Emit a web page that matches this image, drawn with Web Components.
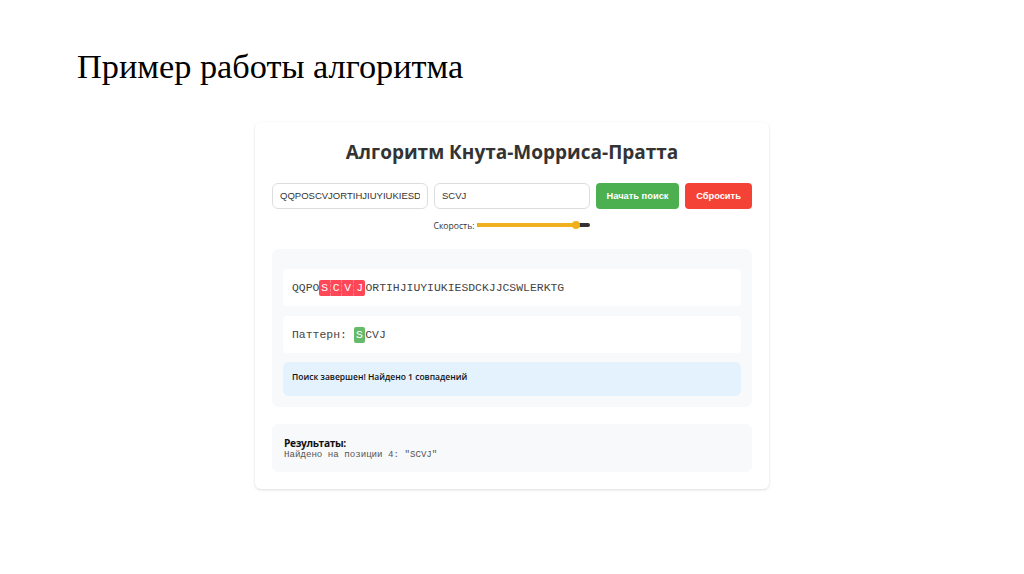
<!DOCTYPE html>
<html lang="ru"><head><meta charset="utf-8"><title>КМП</title>
<style>
html,body{margin:0;padding:0;background:#fff}
body{width:1024px;height:574px;overflow:hidden;font-family:"Open Sans",sans-serif}
</style></head><body>
<slide-page>
  <span slot="title">Пример работы алгоритма</span>
  <kmp-card heading="Алгоритм Кнута-Морриса-Пратта">
    <kmp-controls slot="controls"></kmp-controls>
    <kmp-viz slot="viz">
      <text-row>QQPO<hl-char kind="red" dashed edge="start">S</hl-char><hl-char kind="red" dashed>C</hl-char><hl-char kind="red" dashed>V</hl-char><hl-char kind="red" edge="end">J</hl-char>ORTIHJIUYIUKIESDCKJJCSWLERKTG</text-row>
      <text-row>Паттерн: <hl-char kind="green">S</hl-char>CVJ</text-row>
      <status-box>Поиск завершен! Найдено 1 совпадений</status-box>
    </kmp-viz>
    <kmp-results slot="results"></kmp-results>
  </kmp-card>
</slide-page>
<script>
function def(name, html){
  customElements.define(name, class extends HTMLElement{
    constructor(){super();this.attachShadow({mode:'open'}).innerHTML=html;}
    connectedCallback(){ const h=this.shadowRoot.querySelector('[data-h]'); if(h) h.textContent=this.getAttribute('heading'); }
  });
}
def('slide-page',`<style>
:host{display:block;width:1024px;height:574px;box-sizing:border-box;padding:47px 0 0 77px}
h1{margin:0 0 36px;font:400 34.3px/39px "Liberation Serif",serif;color:#000}
.w{padding-left:178px}
</style><h1><slot name="title"></slot></h1><div class="w"><slot></slot></div>`);
def('kmp-card',`<style>
:host{display:block;width:514px;height:367px;box-sizing:border-box;padding:17px;background:#fff;border-radius:6px;box-shadow:0 1px 3px rgba(0,0,0,.14);font-family:"Open Sans",sans-serif}
h2{margin:0 0 17px;text-align:center;font:700 19px/27px "Open Sans",sans-serif;color:#333}
</style><h2 data-h></h2><slot name="controls"></slot><slot name="viz"></slot><slot name="results"></slot>`);
def('kmp-controls',`<style>
:host{display:block}
.r{display:flex;gap:6px;height:26px}
.i{box-sizing:border-box;width:156px;border:1px solid #ddd;border-radius:6px;padding:0 7px;font:9.52px/24px "Liberation Sans",sans-serif;color:#333;white-space:nowrap;background:#fff}
.i span{display:block;overflow:hidden}
.b{box-sizing:border-box;border-radius:4px;color:#fff;font:700 9.3px/26px "Liberation Sans",sans-serif;text-align:center}
.g{width:83px;background:#4caf50}.d{width:67px;background:#f44336}
.s{display:flex;justify-content:center;align-items:center;gap:3px;margin:8px 0 0;height:18px;font:8.6px/18px "Open Sans",sans-serif;color:#333}
.t{position:relative;display:flex;width:113px;height:4px;border-radius:2px;background:#333;margin-top:-3px}
.f{width:100px;height:4px;border-radius:2px;background:#f0b020}
.k{position:absolute;left:95px;top:-2px;width:8px;height:8px;border-radius:50%;background:#f4b01a}
</style><div class="r"><div class="i"><span>QQPOSCVJORTIHJIUYIUKIESDC</span></div><div class="i"><span>SCVJ</span></div><div class="b g">Начать поиск</div><div class="b d">Сбросить</div></div>
<div class="s"><span>Скорость:</span><div class="t"><div class="f"></div><div class="k"></div></div></div>`);
def('kmp-viz',`<style>
:host{display:flex;flex-direction:column;gap:10px;box-sizing:border-box;height:158px;margin-top:14px;padding:20px 11px 11px;background:#f8f9fa;border-radius:6px}
</style><slot></slot>`);
def('text-row',`<style>
:host{display:block;box-sizing:border-box;height:37px;padding:0 9px;background:#fff;border-radius:4px;font:11.43px/37px "Liberation Mono",monospace;color:#444;white-space:pre}
</style><slot></slot>`);
def('hl-char',`<style>
:host{display:inline-block;box-sizing:border-box;width:11.5px;height:16px;line-height:16px;text-align:center;color:#fff;vertical-align:baseline}
:host([kind=red]){background:#ff4757}
:host([kind=green]){background:#66bb6a;border-radius:2px}
:host([edge=start]){border-radius:2px 0 0 2px}
:host([edge=end]){border-radius:0 2px 2px 0}
:host([dashed]){border-right:1px dashed rgba(255,255,255,.3)}
</style><slot></slot>`);
def('status-box',`<style>
:host{display:block;box-sizing:border-box;height:34px;margin-top:-1px;padding:0 9px;background:#e3f2fd;border-radius:6px;font:600 8.5px/30px "Open Sans",sans-serif;color:#111}
</style><slot></slot>`);
def('kmp-results',`<style>
:host{display:block;box-sizing:border-box;height:48px;margin-top:17px;padding:12px 12px 0;background:#f8f9fa;border-radius:6px}
b{display:block;font:700 10.2px/14px "Open Sans",sans-serif;letter-spacing:-.35px;color:#111}
code{display:block;font:9.14px/10px "Liberation Mono",monospace;color:#555;white-space:pre}
</style><b>Результаты:</b><code>Найдено на позиции 4: "SCVJ"</code>`);
</script>
</body></html>
